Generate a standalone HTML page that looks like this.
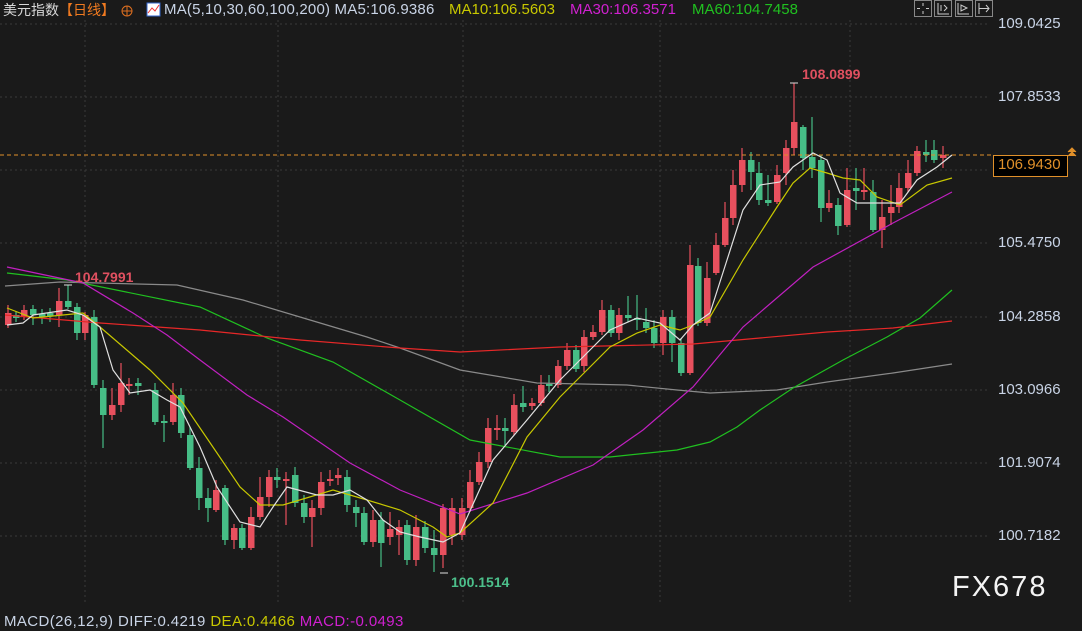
<!DOCTYPE html>
<html><head><meta charset="utf-8"><style>
html,body{margin:0;padding:0;background:#1a1a1a;width:1082px;height:624px;overflow:hidden;font-family:"Liberation Sans","Noto Sans CJK SC",sans-serif}
.t{position:absolute;font-size:15px;white-space:nowrap;line-height:18px}
.ax{position:absolute;left:998px;font-size:15px;color:#c9d4e6;line-height:16px}
</style></head><body>
<svg id="s" width="1082" height="624" style="position:absolute;left:0;top:0">
<g stroke="#3a3a3a" stroke-dasharray="2,3" stroke-width="1">
<line x1="0" y1="24" x2="990" y2="24"/><line x1="0" y1="97" x2="990" y2="97"/><line x1="0" y1="170" x2="990" y2="170"/>
<line x1="0" y1="243" x2="990" y2="243"/><line x1="0" y1="317" x2="990" y2="317"/><line x1="0" y1="390" x2="990" y2="390"/>
<line x1="0" y1="463" x2="990" y2="463"/><line x1="0" y1="536" x2="990" y2="536"/>
<line x1="85" y1="20" x2="85" y2="605"/><line x1="278" y1="20" x2="278" y2="605"/><line x1="463" y1="20" x2="463" y2="605"/><line x1="660" y1="20" x2="660" y2="605"/><line x1="850" y1="20" x2="850" y2="605"/>
</g>
<g id="c"></g>
<g fill="none" stroke-width="1.2">
<polyline stroke="#8a8a8a" points="5,286 60,282 177,285 243,300 300,317 367,337 400,348 460,370 537,383 627,385 677,390 710,393 777,390 827,382 893,373 952,364"/>
<polyline stroke="#20c020" points="7,273 67,280 200,307 267,338 333,362 400,400 470,440 560,457 610,457 677,450 710,442 737,427 760,410 793,388 843,360 887,337 920,318 952,290"/>
<polyline stroke="#e82828" points="5,315 100,323 200,330 300,340 400,348 460,352 560,347 693,344 760,338 827,332 893,328 952,321"/>
<polyline stroke="#c020c0" points="7,267 83,283 133,313 167,335 200,360 247,395 283,417 350,463 400,490 460,514 527,493 593,465 643,430 693,387 743,327 813,267 893,223 952,192"/>
<polyline stroke="#c8c800" points="7,308 33,318 83,313 100,327 150,370 183,403 217,453 240,487 260,505 283,505 333,490 367,500 400,510 433,527 447,537 460,533 493,503 527,437 560,397 577,380 610,347 637,333 660,325 680,330 693,325 710,317 743,260 777,207 793,183 810,168 827,173 843,178 860,180 877,197 900,205 927,185 952,178"/>
<polyline stroke="#e0e0e0" points="7,325 23,323 33,315 67,310 83,315 100,327 113,370 130,393 150,390 167,400 180,407 200,447 217,487 240,522 260,527 273,507 287,487 317,495 333,495 350,490 367,500 383,520 400,532 420,537 443,542 460,533 493,460 527,420 560,380 593,347 610,330 637,318 660,323 680,340 693,325 710,313 727,260 743,210 760,185 780,182 793,167 813,153 827,160 840,193 857,203 873,203 900,203 917,180 937,167 952,155"/>
</g>
<line x1="0" y1="155" x2="992" y2="155" stroke="#e0902a" stroke-dasharray="4,3" stroke-width="1"/>
<rect x="993.5" y="155.5" width="74" height="21" fill="#000" stroke="#e0902a"/>
<path d="M1068 152 l4 -4 l4 4 M1068 156 l4 -4 l4 4" stroke="#e0902a" fill="#e0902a" stroke-width="1"/>
<g stroke="#ddd" stroke-width="1"><line x1="64" y1="285" x2="72" y2="285"/><line x1="790" y1="83" x2="798" y2="83"/><line x1="440" y1="573" x2="448" y2="573"/></g>
<g fill="none" stroke="#888"><rect x="914.5" y="0.5" width="17" height="16"/><rect x="934.5" y="0.5" width="17" height="16"/><rect x="955.5" y="0.5" width="17" height="16"/><rect x="975.5" y="0.5" width="17" height="16"/></g>
<g stroke="#ccc" fill="none"><path d="M923 3v3M923 11v3M917 8.5h3M926 8.5h3"/><path d="M938 3v11h11M941 5v6M944 5l3 3l-3 3"/><path d="M958 3v11h11M961 5v6l6 -3z"/><path d="M979 3v11M979 8.5h10M986 5l3 3.5l-3 3.5"/></g>
<rect x="147" y="3" width="13" height="13" fill="#fff" stroke="#36c"/><path d="M148 13l4-5 3 3 4-6" stroke="#e33" fill="none"/>
<circle cx="127" cy="11" r="5" fill="none" stroke="#e07020"/><path d="M122 11h10M127 6v10" stroke="#e07020"/>
</svg>
<div class="t" style="left:3px;top:1px;color:#d8d8d8;font-size:14px">美元指数<span style="color:#f07a20">【日线】</span></div>
<div class="t" style="left:164px;top:1px;color:#c9d4e6;letter-spacing:0.2px">MA(5,10,30,60,100,200) MA5:106.9386</div>
<div class="t" style="left:449px;top:1px;color:#c8c800">MA10:106.5603</div>
<div class="t" style="left:570px;top:1px;color:#d020d0">MA30:106.3571</div>
<div class="t" style="left:692px;top:1px;color:#20c020">MA60:104.7458</div>
<div class="ax" style="top:16px">109.0425</div>
<div class="ax" style="top:89px">107.8533</div>
<div class="ax" style="top:235px">105.4750</div>
<div class="ax" style="top:309px">104.2858</div>
<div class="ax" style="top:382px">103.0966</div>
<div class="ax" style="top:455px">101.9074</div>
<div class="ax" style="top:528px">100.7182</div>
<div class="ax" style="top:157px;color:#e0902a">106.9430</div>
<div class="t" style="left:802px;top:65px;color:#e05060;font-weight:bold;font-size:14px">108.0899</div>
<div class="t" style="left:75px;top:268px;color:#e05060;font-weight:bold;font-size:14px">104.7991</div>
<div class="t" style="left:451px;top:573px;color:#4cc08b;font-weight:bold;font-size:14px">100.1514</div>
<div class="t" style="left:952px;top:570px;color:#f4f4f4;font-size:29px;line-height:34px;letter-spacing:2px">FX678</div>
<div class="t" style="left:4px;top:613px;color:#c9d4e6;letter-spacing:0.4px">MACD(26,12,9) DIFF:0.4219 <span style="color:#c8c800">DEA:0.4466</span> <span style="color:#d020d0">MACD:-0.0493</span></div>
<script>
var d=[[8,'r',325,313,305,328],[16,'g',315,318,312,322],[24,'r',317,310,305,320],[33,'g',309,315,305,325],[42,'g',314,317,309,324],[50,'g',313,316,308,322],[59,'r',315,301,288,327],[68,'g',301,307,285,309],[77,'g',307,333,303,340],[85,'r',333,315,312,340],[94,'g',317,385,310,388],[103,'g',388,415,380,448],[112,'r',415,405,388,420],[121,'r',405,383,363,412],[129,'r',386,384,378,395],[138,'g',383,386,378,395],[155,'g',390,422,383,425],[164,'g',421,423,415,442],[173,'r',422,395,383,425],[181,'g',395,433,388,438],[190,'g',435,468,427,470],[199,'g',468,498,457,510],[208,'g',498,508,488,522],[216,'r',510,490,480,512],[225,'g',488,540,485,545],[234,'r',540,528,524,549],[242,'g',528,548,524,550],[251,'r',548,517,507,550],[260,'r',517,497,477,520],[269,'r',497,477,470,507],[277,'g',477,480,468,488],[286,'r',481,479,472,525],[295,'g',475,503,467,507],[304,'g',503,517,495,523],[312,'r',517,508,500,547],[321,'r',508,482,472,515],[330,'r',481,479,470,486],[338,'r',478,475,468,485],[347,'g',477,505,470,512],[356,'g',507,513,500,527],[364,'g',513,542,507,545],[373,'r',542,520,510,547],[381,'g',520,543,512,567],[390,'r',537,529,512,545],[399,'r',535,527,520,555],[407,'g',525,560,520,565],[416,'r',560,527,515,566],[425,'g',527,548,521,553],[434,'g',548,555,530,572],[443,'r',555,508,504,568],[452,'r',535,508,498,545],[462,'r',535,508,498,540],[470,'r',508,482,470,512],[479,'r',482,462,452,485],[488,'r',462,428,418,468],[497,'r',430,428,415,440],[505,'g',428,431,418,445],[514,'r',432,405,394,435],[523,'g',403,407,386,412],[532,'r',406,403,398,410],[541,'r',403,385,375,406],[549,'g',384,386,375,392],[558,'r',385,366,360,388],[567,'r',366,350,343,370],[576,'g',350,369,345,372],[584,'r',366,337,330,372],[593,'r',337,332,325,340],[602,'r',332,310,300,335],[611,'g',310,333,305,337],[619,'r',333,315,308,340],[628,'g',315,318,296,322],[637,'g',318,320,295,330],[646,'g',322,328,308,333],[654,'g',328,343,320,348],[663,'r',343,317,310,355],[672,'g',317,343,310,362],[681,'g',343,373,338,376],[690,'r',373,265,245,375],[698,'g',266,323,258,326],[707,'r',323,278,262,326],[716,'r',273,245,233,275],[725,'r',245,218,202,247],[733,'r',218,185,170,225],[742,'r',185,160,148,192],[751,'g',160,172,152,190],[759,'g',173,200,162,205],[768,'g',200,203,175,206],[777,'r',202,175,165,204],[786,'r',173,148,140,185],[794,'r',148,122,83,155],[803,'g',127,158,125,170],[812,'g',157,168,117,178],[821,'g',160,208,155,222],[829,'r',208,203,190,212],[838,'g',205,226,198,235],[847,'r',225,190,168,227],[856,'g',188,191,168,210],[864,'r',192,190,168,200],[873,'g',192,230,180,232],[882,'r',230,217,200,248],[891,'r',213,207,185,225],[899,'r',207,188,173,213],[908,'r',188,173,160,192],[917,'r',173,151,146,176],[926,'g',152,155,140,162],[934,'g',150,160,140,163],[943,'r',158,155,146,168]];
var g=document.getElementById('c'),h='';
d.forEach(function(a){var col=a[1]=='r'?'#e8505e':'#46bd86';var t=Math.min(a[2],a[3]),b=Math.max(a[2],a[3]);if(b-t<2)b=t+2;
h+='<line x1="'+a[0]+'" x2="'+a[0]+'" y1="'+a[4]+'" y2="'+a[5]+'" stroke="'+col+'" stroke-width="1.2"/><rect x="'+(a[0]-3)+'" y="'+t+'" width="6.5" height="'+(b-t)+'" fill="'+col+'"/>';});
g.innerHTML=h;
</script>
</body></html>
